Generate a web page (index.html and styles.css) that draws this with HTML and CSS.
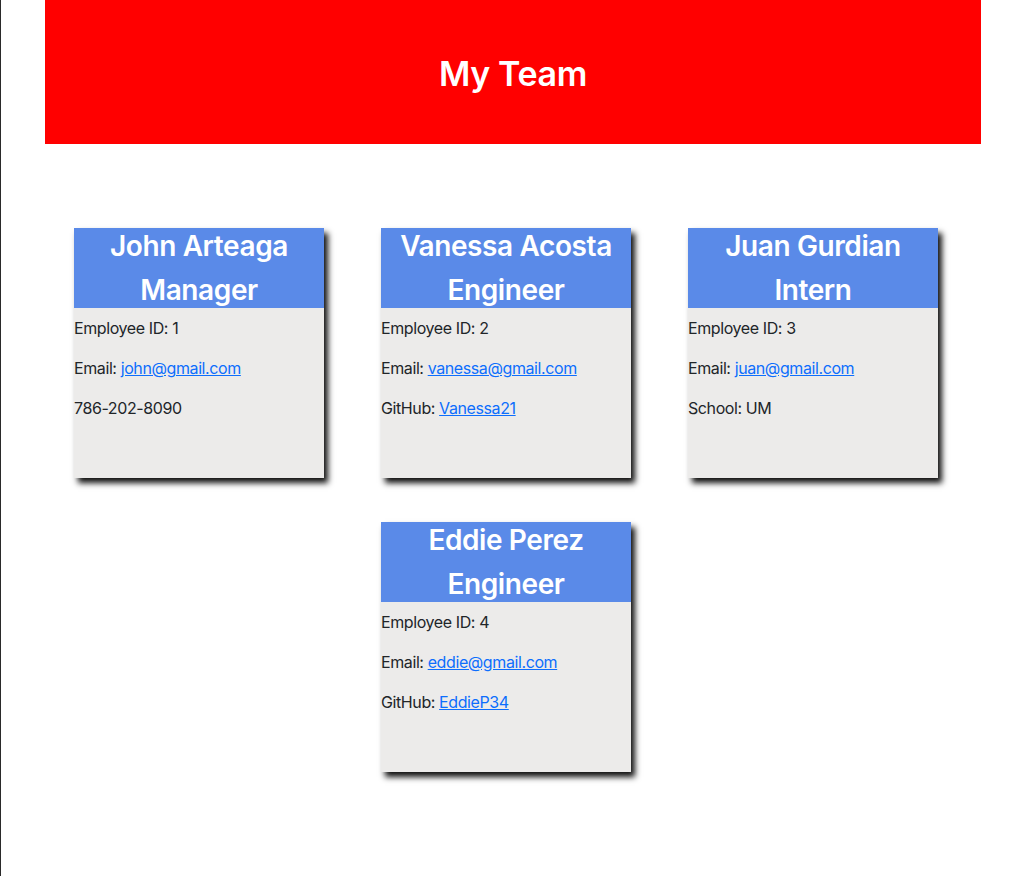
FILE: index.html
```html
<!DOCTYPE html>
<html lang="en">
<head>
<meta charset="utf-8">
<title>My Team</title>
<link rel="stylesheet" href="styles.css">
</head>
<body>
<div class="page">
  <header class="banner">
    <h1 class="banner-title">My Team</h1>
  </header>
  <main class="cards">
    <section class="card">
      <div class="card-head"><h2 class="card-title">John Arteaga<br>Manager</h2></div>
      <div class="card-body">
        <p>Employee ID: 1</p>
        <p>Email: <a href="#">john@gmail.com</a></p>
        <p>786-202-8090</p>
      </div>
    </section>
    <section class="card">
      <div class="card-head"><h2 class="card-title">Vanessa Acosta<br>Engineer</h2></div>
      <div class="card-body">
        <p>Employee ID: 2</p>
        <p>Email: <a href="#">vanessa@gmail.com</a></p>
        <p>GitHub: <a href="#">Vanessa21</a></p>
      </div>
    </section>
    <section class="card">
      <div class="card-head"><h2 class="card-title">Juan Gurdian<br>Intern</h2></div>
      <div class="card-body">
        <p>Employee ID: 3</p>
        <p>Email: <a href="#">juan@gmail.com</a></p>
        <p>School: UM</p>
      </div>
    </section>
    <section class="card">
      <div class="card-head"><h2 class="card-title">Eddie Perez<br>Engineer</h2></div>
      <div class="card-body">
        <p>Employee ID: 4</p>
        <p>Email: <a href="#">eddie@gmail.com</a></p>
        <p>GitHub: <a href="#">EddieP34</a></p>
      </div>
    </section>
  </main>
</div>
</body>
</html>
```

FILE: styles.css
```css
html, body {
  margin: 0;
  padding: 0;
  background: #ffffff;
}

body {
  border-left: 1px solid #2a2a2a;
  min-height: 876px;
  box-sizing: border-box;
  font-family: Inter, "Noto Sans", "Liberation Sans", sans-serif;
  font-size: 16px;
  line-height: 24px;
  color: #212529;
}

.page {
  width: 936px;
  margin: 0 auto;
}

.banner {
  height: 144px;
  background: #ff0000;
  display: flex;
  align-items: center;
  justify-content: center;
}

.banner-title {
  margin: 2px 0 0;
  color: #ffffff;
  font-size: 34px;
  font-weight: 600;
  line-height: 43px;
  letter-spacing: -0.4px;
}

.cards {
  display: flex;
  flex-wrap: wrap;
  justify-content: center;
  column-gap: 57px;
  row-gap: 44px;
  padding: 84px 14px 0 0;
}

.card {
  width: 250px;
  height: 250px;
  background: #ecebea;
  box-shadow: 4px 5px 6px #111111;
}

.card-head {
  display: flow-root;
  height: 80px;
  background: #5a8ae8;
}

.card-title {
  margin: -4px 0 0;
  color: #ffffff;
  text-align: center;
  font-size: 28px;
  font-weight: 600;
  line-height: 44px;
  letter-spacing: -0.4px;
}

.card-body {
  padding-top: 8px;
  letter-spacing: -0.4px;
}

.card-body p {
  margin: 0 0 16px;
}

.card-body a {
  color: #0d6efd;
  text-decoration: underline;
}
```
